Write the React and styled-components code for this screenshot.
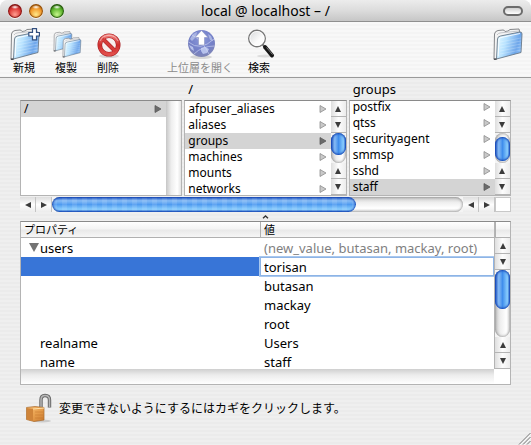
import { useState } from 'react';
import styled, { createGlobalStyle, css } from 'styled-components';

const columns = [
    { title: '', items: ['/'], selected: '/', thumb: null },
    {
        title: '/',
        items: ['afpuser_aliases', 'aliases', 'groups', 'machines', 'mounts', 'networks'],
        selected: 'groups',
        thumb: { offset: 0, size: 22 },
    },
    {
        title: 'groups',
        items: ['postfix', 'qtss', 'securityagent', 'smmsp', 'sshd', 'staff'],
        selected: 'staff',
        thumb: { offset: 4, size: 24 },
        end: true,
    },
];

const App = () => {
    const [member, setMember] = useState('torisan');

    return (
        <Window>
            <GlobalStyle />
            <TitleBar>
                <Lights>
                    <Light aria-label='Close' $dark='#7c1210' $mid='#dd3a36' $glow='#ff9d90' />
                    <Light aria-label='Minimize' $dark='#8c4a08' $mid='#f2982a' $glow='#ffe889' />
                    <Light aria-label='Zoom' $dark='#22530b' $mid='#5cb52c' $glow='#c6f58c' />
                </Lights>
                <Title>local @ localhost – /</Title>
                <Pill aria-label='Toolbar' />
            </TitleBar>

            <Toolbar>
                <Tool><FolderIcon plus />新規</Tool>
                <Tool><FoldersIcon />複製</Tool>
                <Tool><DeleteIcon />削除</Tool>
                <Spacer />
                <Tool disabled><GlobeIcon />上位層を開く</Tool>
                <Tool><SearchIcon />検索</Tool>
                <LastTool aria-label='Directory'><FolderIcon /></LastTool>
            </Toolbar>

            <Content>
                <Browser>
                    {columns.map((column, i) => (
                        <Column key={i}>
                            <Heading>{column.title}</Heading>
                            <Pane>
                                <List $end={column.end}>
                                    {column.items.map((item) => (
                                        <li key={item}>
                                            <Item $selected={item === column.selected}>
                                                {item}
                                                <Triangle selected={item === column.selected} />
                                            </Item>
                                        </li>
                                    ))}
                                </List>
                                <ScrollBar thumb={column.thumb} />
                            </Pane>
                        </Column>
                    ))}
                </Browser>
                <BrowserFoot>
                    <ScrollBar horizontal thumb={{ offset: 0, size: '74%' }} />
                    <Corner $outlined />
                </BrowserFoot>
                <Splitter>
                    <svg width='7' height='4' viewBox='0 0 7 4'>
                        <path d='M1 3.2 L3.5 1 L6 3.2' fill='none' stroke='#333' strokeWidth='1.4' />
                    </svg>
                </Splitter>

                <Outline>
                    <TableClip>
                        <Table>
                            <thead>
                                <tr>
                                    <NameHead>プロパティ</NameHead>
                                    <ValueHead>値</ValueHead>
                                </tr>
                            </thead>
                            <tbody>
                                <tr>
                                    <Name>
                                        <Disclosure aria-label='users'>
                                            <svg width='10' height='9' viewBox='0 0 10 9'>
                                                <path d='M0 0 H10 L5 9 Z' fill='#737373' />
                                            </svg>
                                        </Disclosure>
                                        users
                                    </Name>
                                    <Value $muted>(new_value, butasan, mackay, root)</Value>
                                </tr>
                                <tr>
                                    <Name $selected />
                                    <FieldCell>
                                        <Field
                                            aria-label='users'
                                            value={member}
                                            onChange={(e) => setMember(e.target.value)}
                                        />
                                    </FieldCell>
                                </tr>
                                <tr><Name /><Value>butasan</Value></tr>
                                <tr><Name /><Value>mackay</Value></tr>
                                <tr><Name /><Value>root</Value></tr>
                                <tr><Name>realname</Name><Value>Users</Value></tr>
                                <tr><Name>name</Name><Value>staff</Value></tr>
                            </tbody>
                        </Table>
                    </TableClip>
                    <OutlineSide>
                        <HeadCorner />
                        <ScrollBar thumb={{ offset: 0, size: 39 }} />
                    </OutlineSide>
                    <EmptyTrack />
                    <Corner />
                </Outline>

                <LockRow>
                    <LockButton aria-label='カギ'><LockIcon /></LockButton>
                    変更できないようにするにはカギをクリックします。
                </LockRow>
            </Content>
            <Grip width='13' height='13' viewBox='0 0 13 13'>
                <path d='M1 12.5 L12.5 1 M5 12.5 L12.5 5 M9 12.5 L12.5 9' stroke='#777' />
                <path d='M2 13 L13 2 M6 13 L13 6' stroke='#fff' strokeWidth='0.6' />
            </Grip>
        </Window>
    );
}

export default App;

const arrows = {
    up: 'M1 7 L4 1 L7 7 Z',
    down: 'M1 1 L4 7 L7 1 Z',
    left: 'M7 1 L1 4 L7 7 Z',
    right: 'M1 1 L7 4 L1 7 Z',
};

const ArrowButton = ({ dir, horizontal }) => (
    <Arrow aria-label={dir} $horizontal={horizontal}>
        <svg width='8' height='8' viewBox='0 0 8 8'>
            <path d={arrows[dir]} fill='#3c3c3c' />
        </svg>
    </Arrow>
);

const ScrollBar = ({ horizontal, thumb }) => {
    if (!thumb) {
        return <Track />;
    }
    const back = horizontal ? 'left' : 'up';
    const forward = horizontal ? 'right' : 'down';
    return (
        <Bar $horizontal={horizontal}>
            <ArrowButton dir={back} horizontal={horizontal} />
            <ArrowButton dir={forward} horizontal={horizontal} />
            <Track $horizontal={horizontal} $round>
                <Thumb
                    $horizontal={horizontal}
                    style={horizontal
                        ? { width: thumb.size, marginLeft: thumb.offset }
                        : { height: thumb.size, marginTop: thumb.offset }}
                />
            </Track>
            <ArrowButton dir={back} horizontal={horizontal} />
            <ArrowButton dir={forward} horizontal={horizontal} />
        </Bar>
    );
}

const Triangle = ({ selected }) => (
    <svg width='8' height='8' viewBox='0 0 8 8'>
        <path
            d='M1 0.5 L7 4 L1 7.5 Z'
            fill={selected ? '#6b6b6b' : '#c9c9c9'}
            stroke={selected ? '#5c5c5c' : '#8d8d8d'}
            strokeWidth='0.8'
        />
    </svg>
);

const FolderShape = () => (
    <>
        <path d='M3 31 L3.5 6 Q4 3 7 2.5 L12 2 Q13.5 2 14 3.5 L17 3 L19 1.5 L28 1 L29 5 L6 31 Z' fill='#f4f4f4' stroke='#77797d' strokeWidth='0.9' />
        <path d='M6 7 Q7 5 10 4.8 L28 3' fill='none' stroke='#c3c5c9' />
        <path d='M5.5 31 L6.5 11 Q6.8 8.3 9.5 8 L29 4 Q31 3.8 31 6 L30 24.5 Z' fill='url(#folder)' stroke='#6a7887' strokeWidth='0.9' />
        <path d='M7.2 28.5 L8 11.5 Q8.2 9.8 10 9.5 L29 5.5' fill='none' stroke='#fff' strokeOpacity='0.85' />
        <path d='M9 14 L30 10 M9 17 L30 13 M9 20 L30 16 M9 23 L30 19 M9 26 L30 22' stroke='#fff' strokeOpacity='0.22' />
        <path d='M2.8 31.2 L5.5 31.2' stroke='#4a4d52' strokeWidth='1.4' />
    </>
);

const FolderGradient = () => (
    <linearGradient id='folder' x1='0' y1='0.3' x2='1' y2='0.6'>
        <stop offset='0' stopColor='#e2f8ff' />
        <stop offset='0.35' stopColor='#b7e2ff' />
        <stop offset='0.8' stopColor='#6ea6ea' />
        <stop offset='1' stopColor='#8cc0f8' />
    </linearGradient>
);

const FolderIcon = ({ plus }) => (
    <svg width='32' height='32' viewBox='0 0 32 32'>
        <defs><FolderGradient /></defs>
        <FolderShape />
        {plus && (
            <path
                d='M24.5 0.7 H28.5 V4.5 H31.4 V8 H28.5 V11.8 H24.5 V8 H20.8 V4.5 H24.5 Z'
                fill='#fff'
                stroke='#34507f'
                strokeWidth='1.2'
            />
        )}
    </svg>
);

const FoldersIcon = () => (
    <svg width='32' height='32' viewBox='0 0 32 32'>
        <defs><FolderGradient /></defs>
        <g transform='translate(2 3) scale(0.64)'><FolderShape /></g>
        <g transform='translate(11 9) scale(0.64)'><FolderShape /></g>
    </svg>
);

const DeleteIcon = () => (
    <svg width='32' height='32' viewBox='0 0 32 32'>
        <defs>
            <linearGradient id='ban' x1='0' y1='0' x2='0' y2='1'>
                <stop offset='0' stopColor='#ee7a76' />
                <stop offset='0.5' stopColor='#cf2c2c' />
                <stop offset='1' stopColor='#e2504c' />
            </linearGradient>
        </defs>
        <ellipse cx='17' cy='28' rx='10' ry='2' fill='#000' opacity='0.12' />
        <circle cx='17' cy='17' r='9.2' fill='#f7eeee' stroke='#a61c20' strokeWidth='4.6' />
        <path d='M10.5 10.5 L23.5 23.5' stroke='#b32226' strokeWidth='4' />
        <circle cx='17' cy='17' r='9.2' fill='none' stroke='url(#ban)' strokeWidth='3.4' />
        <path d='M10.5 10.5 L23.5 23.5' stroke='#d63c3b' strokeWidth='2.8' />
        <path d='M8 13 A10 10 0 0 1 26 13' fill='none' stroke='#fff' strokeOpacity='0.45' />
    </svg>
);

const GlobeIcon = () => (
    <svg width='32' height='32' viewBox='0 0 32 32'>
        <defs>
            <radialGradient id='globe' cx='0.5' cy='0.35' r='0.7'>
                <stop offset='0' stopColor='#8b99da' />
                <stop offset='0.6' stopColor='#7480c8' />
                <stop offset='1' stopColor='#8287b0' />
            </radialGradient>
        </defs>
        <ellipse cx='17' cy='29' rx='11' ry='2' fill='#000' opacity='0.12' />
        <circle cx='17.5' cy='15.5' r='13.5' fill='url(#globe)' />
        <path d='M6 11 L9 6 L13 4 L12 9 L8 13 Z M24 6 L27 8 L29 13 L26 12 Z' fill='#a9b4e2' />
        <path d='M17 20 L21 19 L25 21 L23 25 L19 26 L17 23 Z M5 17 L9 19 L10 23 L7 21 Z' fill='#b7c2ec' />
        <path
            d='M4.5 14 Q16 24 30 11 M8 7 Q18 12 25 26 M10 26 Q18 18 30.5 18'
            fill='none'
            stroke='#d3daf5'
            strokeWidth='0.6'
        />
        <path d='M17.5 2.5 L24 9.5 H20.5 V17 H14.5 V9.5 H11 Z' fill='#fff' stroke='#8992c0' strokeWidth='0.6' />
    </svg>
);

const SearchIcon = () => (
    <svg width='32' height='32' viewBox='0 0 32 32'>
        <defs>
            <linearGradient id='lens' x1='0' y1='0' x2='1' y2='1'>
                <stop offset='0' stopColor='#d4d6d8' />
                <stop offset='0.6' stopColor='#fbfbfb' />
                <stop offset='1' stopColor='#ffffff' />
            </linearGradient>
        </defs>
        <ellipse cx='22' cy='28' rx='8' ry='1.5' fill='#000' opacity='0.1' />
        <path d='M19.5 16.5 L23 20' stroke='#777' strokeWidth='2' />
        <path d='M22 19 L29 27.5' stroke='#161616' strokeWidth='4' strokeLinecap='round' />
        <path d='M23.5 19.5 L29.5 26.5' stroke='#858585' strokeWidth='0.9' />
        <circle cx='14' cy='10.5' r='8.3' fill='url(#lens)' stroke='#777' strokeWidth='1.4' />
        <circle cx='14' cy='10.5' r='7.1' fill='none' stroke='#fff' strokeWidth='0.8' />
    </svg>
);

const LockIcon = () => (
    <svg width='27' height='30' viewBox='0 0 27 30'>
        <defs>
            <linearGradient id='lock' x1='0' y1='0' x2='1' y2='1'>
                <stop offset='0' stopColor='#f6c077' />
                <stop offset='0.5' stopColor='#e8a04e' />
                <stop offset='1' stopColor='#c97a30' />
            </linearGradient>
        </defs>
        <ellipse cx='16' cy='28' rx='9' ry='1.5' fill='#000' opacity='0.15' />
        <path d='M15 15 V7 Q15 2.5 19 2.5 Q23.5 2.5 23.5 7 V14.5' fill='none' stroke='#666' strokeWidth='3.4' />
        <path d='M15 15 V7 Q15 2.5 19 2.5 Q23.5 2.5 23.5 7 V14' fill='none' stroke='#b5b5b5' strokeWidth='1.5' />
        <path d='M0.5 14.5 L9 13.5 L18 14.5 V27 L8 28.5 L0.5 26.5 Z' fill='url(#lock)' stroke='#a8672a' strokeWidth='0.7' />
        <path d='M0.8 15 L7 16 V28 L0.8 26.5 Z' fill='#cf8439' />
        <path d='M7 16 L18 15' stroke='#ffe0a8' />
        <path d='M9 19 H17 M9 22 H17 M9 25 H17' stroke='#b96a22' strokeOpacity='0.4' />
    </svg>
);

/* Styling */
const GlobalStyle = createGlobalStyle`
    * {
        box-sizing: border-box;
    }
    body {
        margin: 0;
        background: #fff;
    }
    body, button, input, table {
        font-family: 'Lucida Grande', 'Noto Sans', 'Noto Sans CJK JP', sans-serif;
        font-size: 13px;
        color: #000;
    }
    button {
        border: 0;
        padding: 0;
        background: none;
    }
    svg {
        display: block;
        flex: none;
    }
`;

const Window = styled.div`
    position: relative;
    min-height: 100vh;
    border-radius: 8px 8px 0 0;
    overflow: hidden;
    background: repeating-linear-gradient(#efefef 0 2px, #ebebeb 2px 4px);
`;

const TitleBar = styled.header`
    display: grid;
    grid-template-columns: 1fr auto 1fr;
    align-items: center;
    height: 22px;
    padding: 0 8px;
    border-bottom: 1px solid #8f8f8f;
    background: linear-gradient(#ececec, #dcdcdc 50%, #c6c6c6);
`;

const Lights = styled.div`
    display: flex;
    gap: 7px;
`;

const Light = styled.button`
    width: 14px;
    height: 14px;
    border-radius: 50%;
    background:
        radial-gradient(ellipse 4px 2px at 50% 22%, #fff, transparent),
        radial-gradient(circle at 50% 75%, ${(p) => p.$glow}, ${(p) => p.$mid} 50%, ${(p) => p.$dark} 90%);
    box-shadow: inset 0 0 1px 1px ${(p) => p.$dark}, 0 1px 0 #f2f2f2;
`;

const Title = styled.h1`
    margin: 0;
    font-size: 14px;
    font-weight: 400;
    line-height: 20px;
`;

const Pill = styled.button`
    justify-self: end;
    width: 20px;
    height: 10px;
    border: 2px solid #6c6c6c;
    border-radius: 5px;
    background: linear-gradient(#cfcfcf, #fff);
`;

const Toolbar = styled.div`
    display: flex;
    align-items: flex-start;
    gap: 10px;
    height: 56px;
    padding: 6px 8px 0;
    border-bottom: 1px solid #9a9a9a;
    background: repeating-linear-gradient(#f8f8f8 0 2px, #f4f4f4 2px 4px);
`;

const Tool = styled.button`
    display: flex;
    flex-direction: column;
    align-items: center;
    min-width: 32px;
    font-size: 11px;
    line-height: 16px;
    white-space: nowrap;
    &:disabled {
        color: #8c8c8c;
    }
`;

const LastTool = styled(Tool)`
    margin-left: auto;
`;

const Spacer = styled.div`
    width: 23px;
`;

const Content = styled.main`
    padding: 0 20px;
`;

const Browser = styled.div`
    display: grid;
    grid-template-columns: repeat(3, minmax(0, 1fr));
    gap: 2px;
`;

const Column = styled.section`
    min-width: 0;
`;

const Heading = styled.h2`
    height: 22px;
    margin: 0;
    padding-left: 4px;
    font-size: 13px;
    font-weight: 400;
    line-height: 22px;
`;

const Pane = styled.div`
    display: flex;
    height: 96px;
    border: 1px solid #b4b4b4;
    border-top-color: #8a8a8a;
    background: #fff;
`;

const List = styled.ul`
    display: flex;
    flex: 1;
    flex-direction: column;
    justify-content: ${(p) => (p.$end ? 'flex-end' : 'flex-start')};
    min-width: 0;
    margin: 0;
    padding: 0;
    overflow: hidden;
    list-style: none;
`;

const Item = styled.button`
    display: flex;
    align-items: center;
    justify-content: space-between;
    width: 100%;
    height: 16px;
    padding: 0 4px 0 3px;
    font-size: 12px;
    line-height: 16px;
    background: ${(p) => (p.$selected ? '#d4d4d4' : 'none')};
`;

const Bar = styled.div`
    display: flex;
    flex: 1;
    flex-direction: ${(p) => (p.$horizontal ? 'row' : 'column')};
    max-width: ${(p) => (p.$horizontal ? 'none' : '15px')};
    min-width: 15px;
    background: #f4f4f4;
`;

const Arrow = styled.button`
    display: flex;
    flex: none;
    align-items: center;
    justify-content: center;
    ${(p) => p.$horizontal ? css`
        width: 16px;
        border-right: 1px solid #c4c4c4;
        background: linear-gradient(#dedede, #fdfdfd 50%, #ececec);
    ` : css`
        height: 16px;
        border-bottom: 1px solid #b4b4b4;
        background: linear-gradient(90deg, #dedede, #fdfdfd 50%, #ececec);
    `}
`;

const Track = styled.div`
    flex: ${(p) => (p.$round ? '1' : '0 0 15px')};
    border-radius: ${(p) => (p.$round ? '8px' : '0')};
    background: linear-gradient(${(p) => (p.$horizontal ? '180deg' : '90deg')}, #c6c6c6, #eee 35%, #fff 75%, #e4e4e4);
    box-shadow: ${(p) => (p.$round ? 'inset 0 0 3px #777' : 'none')};
`;

const Thumb = styled.div`
    border-radius: 8px;
    box-shadow: inset 0 0 2px 1px #1546b4;
    ${(p) => p.$horizontal ? css`
        height: 100%;
        background:
            repeating-linear-gradient(90deg, rgba(255, 255, 255, 0.1) 0 5px, transparent 5px 10px),
            linear-gradient(#2a60c8, #86bbf5 25%, #4f9bf0 50%, #8fd2ff 85%, #3878d8);
    ` : css`
        width: 100%;
        background: linear-gradient(90deg, #2a60c8, #86bbf5 25%, #3f8dec 50%, #8fd2ff 85%, #3878d8);
    `}
`;

const BrowserFoot = styled.div`
    display: flex;
    height: 15px;
    margin-top: 1px;
`;

const Corner = styled.div`
    width: 16px;
    border: ${(p) => (p.$outlined ? '1px solid #c8c8c8' : '0')};
    background: #fff;
`;

const Splitter = styled.div`
    display: flex;
    align-items: center;
    justify-content: center;
    height: 9px;
`;

const Outline = styled.div`
    display: grid;
    grid-template-columns: minmax(0, 1fr) 16px;
    grid-template-rows: 147px 15px;
    border: 1px solid #b4b4b4;
    border-top-color: #8a8a8a;
    background: #fff;
`;

const TableClip = styled.div`
    overflow: hidden;
`;

const Table = styled.table`
    width: 100%;
    table-layout: fixed;
    border-collapse: separate;
    border-spacing: 0;
    text-align: left;
`;

const headFace = css`
    height: 16px;
    border-bottom: 1px solid #b0b0b0;
    background: linear-gradient(#fff, #f4f4f4 45%, #e9e9e9 55%, #f6f6f6);
`;

const NameHead = styled.th`
    ${headFace}
    width: 239px;
    padding: 0 3px;
    font-size: 11px;
    font-weight: 400;
    line-height: 15px;
`;

const ValueHead = styled(NameHead)`
    width: auto;
    border-left: 1px solid #b0b0b0;
`;

const HeadCorner = styled.div`
    ${headFace}
    border-left: 1px solid #b0b0b0;
`;

const Name = styled.td`
    position: relative;
    height: 19px;
    padding: 2px 0 0 19px;
    line-height: 17px;
    background: ${(p) => (p.$selected ? '#3875d7' : 'none')};
`;

const Value = styled.td`
    height: 19px;
    padding: 2px 0 0 4px;
    line-height: 17px;
    white-space: nowrap;
    color: ${(p) => (p.$muted ? '#7f7f7f' : '#000')};
`;

const FieldCell = styled.td`
    height: 19px;
    padding: 0;
`;

const Field = styled.input`
    display: block;
    position: relative;
    width: 100%;
    height: 19px;
    padding: 0 3px;
    border: 1px solid #8db4e6;
    outline: 0;
    background: #fff;
    box-shadow: 0 0 0 1px #a9c8ee;
`;

const Disclosure = styled.button`
    position: absolute;
    left: 8px;
    top: 5px;
`;

const OutlineSide = styled.div`
    display: flex;
    flex-direction: column;
    border-left: 1px solid #b4b4b4;
`;

const EmptyTrack = styled.div`
    background: linear-gradient(#cfcfcf, #ececec 40%, #fff);
`;

const LockRow = styled.div`
    display: flex;
    align-items: center;
    gap: 6px;
    padding: 8px 6px;
    font-size: 12px;
`;

const LockButton = styled.button`
    flex: none;
`;

const Grip = styled.svg`
    position: absolute;
    right: 0;
    bottom: 0;
`;
